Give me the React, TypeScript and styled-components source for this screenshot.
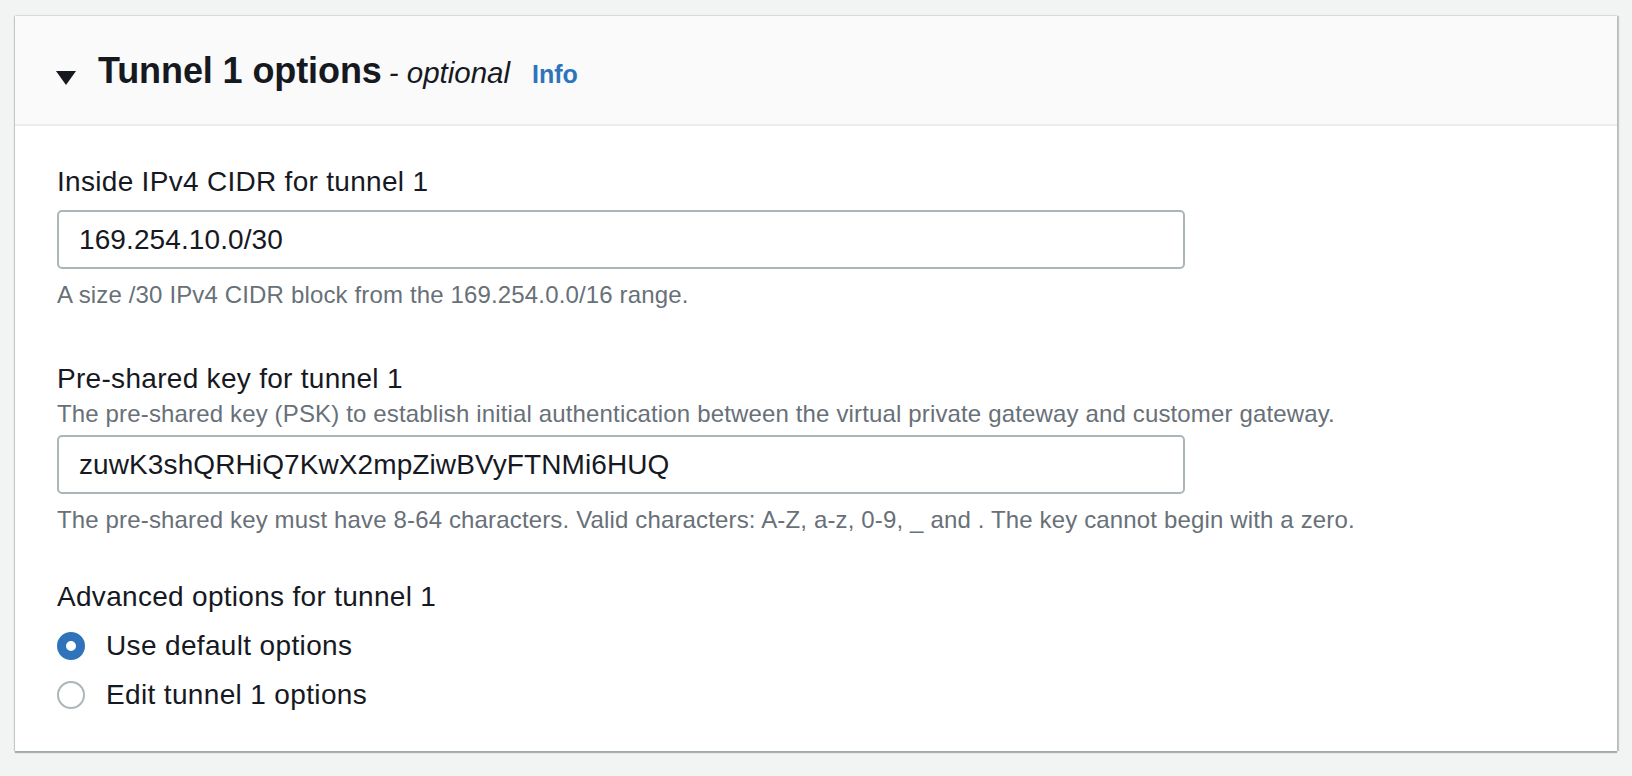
import React, { useState } from "react";
import styled, { createGlobalStyle } from "styled-components";

const GlobalStyle = createGlobalStyle`
  html, body {
    margin: 0;
    padding: 0;
    background: #f2f3f3;
  }
  body {
    font-family: "Liberation Sans", Arial, sans-serif;
    color: #16191f;
  }
`;

const Page = styled.div`
  padding: 16px 15px 22px 15px;
`;

const Card = styled.section`
  background: #ffffff;
  box-shadow: 0 2px 1px 0 rgba(0, 28, 36, 0.3), 2px 0 1px 0 rgba(0, 28, 36, 0.2),
    -1px 0 1px 0 rgba(0, 28, 36, 0.15), 0 -1px 1px 0 rgba(0, 28, 36, 0.06);
`;

const Header = styled.header`
  display: flex;
  align-items: center;
  height: 108px;
  padding-left: 41px;
  background: #fafafa;
  border-bottom: 2px solid #eaeded;
`;

const Caret = styled.span`
  width: 0;
  height: 0;
  margin-top: 16px;
  margin-right: 22px;
  border-left: 10px solid transparent;
  border-right: 10px solid transparent;
  border-top: 14px solid #16191f;
`;

const TitleRow = styled.h2`
  display: flex;
  align-items: baseline;
  margin: 0;
  margin-top: 2px;
`;

const Title = styled.span`
  font-size: 36px;
  font-weight: 700;
  letter-spacing: -0.1px;
`;

const Optional = styled.span`
  font-size: 29.5px;
  font-weight: 400;
  font-style: italic;
  margin-left: 7px;
`;

const InfoLink = styled.a`
  font-size: 25px;
  font-weight: 700;
  color: #2f74bb;
  margin-left: 22px;
  text-decoration: none;
  cursor: pointer;
`;

const Body = styled.div`
  padding: 37px 42px 36px 42px;
`;

const Field = styled.div<{ $gap?: number }>`
  display: flex;
  flex-direction: column;
  margin-bottom: ${(p) => p.$gap ?? 46}px;
`;

const Label = styled.label`
  font-size: 28px;
  line-height: 38px;
  letter-spacing: 0.3px;
  color: #16191f;
`;

const Description = styled.div<{ $top?: number }>`
  font-size: 24px;
  line-height: 32px;
  letter-spacing: 0.15px;
  color: #687078;
  margin-top: ${(p) => p.$top ?? 0}px;
`;

const Input = styled.input<{ $top?: number }>`
  box-sizing: border-box;
  width: 1128px;
  height: 59px;
  margin-top: ${(p) => p.$top ?? 0}px;
  padding: 0 20px;
  border: 2px solid #aab7b8;
  border-radius: 5px;
  font-family: "Liberation Sans", Arial, sans-serif;
  font-size: 28px;
  letter-spacing: 0.1px;
  color: #16191f;
  background: #ffffff;
  outline: none;
`;

const RadioGroup = styled.div`
  display: flex;
  flex-direction: column;
  gap: 9px;
  margin-top: 10px;
`;

const RadioRow = styled.label`
  display: flex;
  align-items: center;
  gap: 21px;
  height: 40px;
  font-size: 28px;
  letter-spacing: 0.35px;
  cursor: pointer;
`;

const RadioDot = styled.span<{ $checked: boolean }>`
  box-sizing: border-box;
  width: 28px;
  height: 28px;
  border-radius: 50%;
  flex-shrink: 0;
  background: #ffffff;
  border: ${(p) => (p.$checked ? "9px solid #2f74bb" : "2px solid #aab7b8")};
`;

const options = ["Use default options", "Edit tunnel 1 options"];

export default function App() {
  const [cidr, setCidr] = useState("169.254.10.0/30");
  const [psk, setPsk] = useState("zuwK3shQRHiQ7KwX2mpZiwBVyFTNMi6HUQ");
  const [choice, setChoice] = useState(0);

  return (
    <Page>
      <GlobalStyle />
      <Card>
        <Header>
          <Caret />
          <TitleRow>
            <Title>Tunnel 1 options</Title>
            <Optional>- optional</Optional>
            <InfoLink>Info</InfoLink>
          </TitleRow>
        </Header>
        <Body>
          <Field $gap={49}>
            <Label>Inside IPv4 CIDR for tunnel 1</Label>
            <Input $top={9} value={cidr} onChange={(e) => setCidr(e.target.value)} />
            <Description $top={10}>A size /30 IPv4 CIDR block from the 169.254.0.0/16 range.</Description>
          </Field>
          <Field $gap={42}>
            <Label>Pre-shared key for tunnel 1</Label>
            <Description>
              The pre-shared key (PSK) to establish initial authentication between the virtual private
              gateway and customer gateway.
            </Description>
            <Input $top={5} value={psk} onChange={(e) => setPsk(e.target.value)} />
            <Description $top={10}>
              The pre-shared key must have 8-64 characters. Valid characters: A-Z, a-z, 0-9, _ and . The
              key cannot begin with a zero.
            </Description>
          </Field>
          <Field $gap={0}>
            <Label>Advanced options for tunnel 1</Label>
            <RadioGroup>
              {options.map((o, i) => (
                <RadioRow key={o} onClick={() => setChoice(i)}>
                  <RadioDot $checked={choice === i} />
                  {o}
                </RadioRow>
              ))}
            </RadioGroup>
          </Field>
        </Body>
      </Card>
    </Page>
  );
}
